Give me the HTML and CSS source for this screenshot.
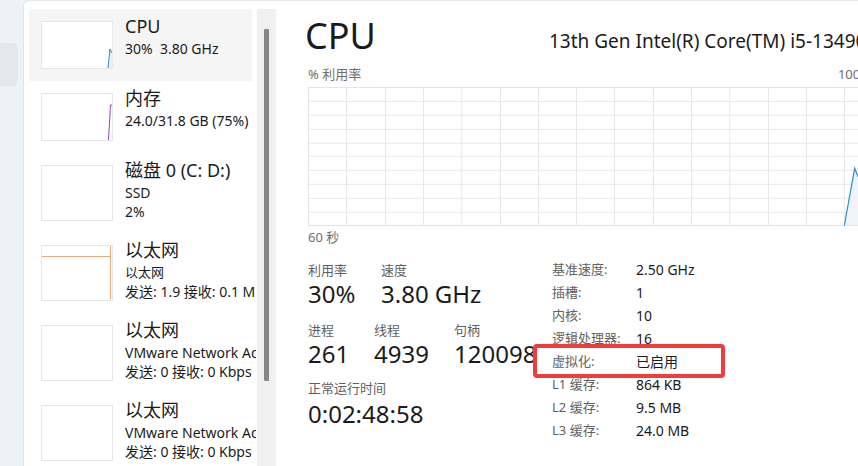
FILE: index.html
```html
<!DOCTYPE html>
<html lang="zh-CN">
<head>
<meta charset="utf-8">
<title>任务管理器 - 性能</title>
<link rel="stylesheet" href="styles.css">
</head>
<body>
<div class="app">
  <nav class="rail"><div class="rail-pill"></div></nav>
  <main class="main">
    <section class="sidebar">
      <div class="list">
        <div class="item item-sel">
          <div class="thumb">
            <svg class="spark" width="70" height="46" viewBox="0 0 70 46">
              <polygon points="66,46 68,27 70,31 70,46" fill="#e8f1fa"/>
              <polyline points="66,46 68,27 70,31" fill="none" stroke="#2f8ad0" stroke-width="1"/>
            </svg>
          </div>
          <div class="info">
            <div class="title">CPU</div>
            <div class="sub">30%&nbsp; 3.80 GHz</div>
          </div>
        </div>
        <div class="item">
          <div class="thumb">
            <svg class="spark" width="70" height="46" viewBox="0 0 70 46">
              <polyline points="66.5,46 68.5,11 70,11" fill="none" stroke="#9a42b8" stroke-width="1"/>
            </svg>
          </div>
          <div class="info">
            <div class="title">内存</div>
            <div class="sub">24.0/31.8 GB (75%)</div>
          </div>
        </div>
        <div class="item item-3">
          <div class="thumb"></div>
          <div class="info">
            <div class="title">磁盘 0 (C: D:)</div>
            <div class="sub">SSD</div>
            <div class="sub">2%</div>
          </div>
        </div>
        <div class="item item-3">
          <div class="thumb">
            <svg class="spark" width="70" height="54" viewBox="0 0 70 54">
              <line x1="0" y1="10.5" x2="69" y2="10.5" stroke="#e8a878" stroke-width="1"/>
              <line x1="68.5" y1="0" x2="68.5" y2="53" stroke="#e8a878" stroke-width="1"/>
            </svg>
          </div>
          <div class="info">
            <div class="title">以太网</div>
            <div class="sub sub-cjk">以太网</div>
            <div class="sub">发送: 1.9 接收: 0.1 Mbps</div>
          </div>
        </div>
        <div class="item item-3">
          <div class="thumb"></div>
          <div class="info">
            <div class="title">以太网</div>
            <div class="sub">VMware Network Adapter VMnet1</div>
            <div class="sub">发送: 0 接收: 0 Kbps</div>
          </div>
        </div>
        <div class="item item-3">
          <div class="thumb"></div>
          <div class="info">
            <div class="title">以太网</div>
            <div class="sub">VMware Network Adapter VMnet8</div>
            <div class="sub">发送: 0 接收: 0 Kbps</div>
          </div>
        </div>
      </div>
      <div class="track"><div class="track-thumb"></div></div>
    </section>

    <section class="detail">
      <header class="head">
        <h1 class="big-title">CPU</h1>
        <div class="cpu-name">13th Gen Intel(R) Core(TM) i5-13490F</div>
      </header>

      <div class="axis-row">
        <span>% 利用率</span>
        <span>100%</span>
      </div>
      <svg class="graph" width="560" height="139" viewBox="0 0 560 139">
        <g stroke="#e8e8e8" stroke-width="1">
          <line x1="0" y1="14.3" x2="560" y2="14.3"/>
          <line x1="0" y1="28.3" x2="560" y2="28.3"/>
          <line x1="0" y1="42.3" x2="560" y2="42.3"/>
          <line x1="0" y1="56.3" x2="560" y2="56.3"/>
          <line x1="0" y1="69.3" x2="560" y2="69.3"/>
          <line x1="0" y1="83.3" x2="560" y2="83.3"/>
          <line x1="0" y1="97.3" x2="560" y2="97.3"/>
          <line x1="0" y1="111.3" x2="560" y2="111.3"/>
          <line x1="0" y1="125.3" x2="560" y2="125.3"/>
          <line x1="38.5" y1="0" x2="38.5" y2="139"/>
          <line x1="77.5" y1="0" x2="77.5" y2="139"/>
          <line x1="115.5" y1="0" x2="115.5" y2="139"/>
          <line x1="153.8" y1="0" x2="153.8" y2="139"/>
          <line x1="192.5" y1="0" x2="192.5" y2="139"/>
          <line x1="230.5" y1="0" x2="230.5" y2="139"/>
          <line x1="268.5" y1="0" x2="268.5" y2="139"/>
          <line x1="306.5" y1="0" x2="306.5" y2="139"/>
          <line x1="345.5" y1="0" x2="345.5" y2="139"/>
          <line x1="383.5" y1="0" x2="383.5" y2="139"/>
          <line x1="421.8" y1="0" x2="421.8" y2="139"/>
          <line x1="460.5" y1="0" x2="460.5" y2="139"/>
          <line x1="498.5" y1="0" x2="498.5" y2="139"/>
          <line x1="536.5" y1="0" x2="536.5" y2="139"/>
        </g>
        <rect x="0.5" y="0.5" width="559" height="138" fill="none" stroke="#e4e4e4" stroke-width="1"/>
        <polygon points="536.3,138 546.7,81.3 550,89.7 560,96 560,138" fill="#eef4fa"/>
        <polyline points="536.3,138.5 546.7,81.3 550,89.7 560,96" fill="none" stroke="#2f8ad0" stroke-width="1.2"/>
      </svg>
      <div class="axis-row axis-bottom">
        <span>60 秒</span>
        <span>0</span>
      </div>

      <div class="stats">
        <div class="stats-left">
          <div class="stat-row">
            <div class="stat stat-w73">
              <div class="stat-label">利用率</div>
              <div class="stat-value">30%</div>
            </div>
            <div class="stat">
              <div class="stat-label">速度</div>
              <div class="stat-value">3.80 GHz</div>
            </div>
          </div>
          <div class="stat-row stat-row-2">
            <div class="stat stat-w66">
              <div class="stat-label">进程</div>
              <div class="stat-value">261</div>
            </div>
            <div class="stat stat-w80">
              <div class="stat-label">线程</div>
              <div class="stat-value">4939</div>
            </div>
            <div class="stat">
              <div class="stat-label">句柄</div>
              <div class="stat-value">120098</div>
            </div>
          </div>
          <div class="stat-row stat-row-3">
            <div class="stat">
              <div class="stat-label">正常运行时间</div>
              <div class="stat-value stat-uptime">0:02:48:58</div>
            </div>
          </div>
        </div>
        <dl class="specs">
          <dt>基准速度:</dt><dd>2.50 GHz</dd>
          <dt>插槽:</dt><dd>1</dd>
          <dt>内核:</dt><dd>10</dd>
          <dt>逻辑处理器:</dt><dd>16</dd>
          <dt>虚拟化:</dt><dd>已启用</dd>
          <dt>L1 缓存:</dt><dd>864 KB</dd>
          <dt>L2 缓存:</dt><dd>9.5 MB</dd>
          <dt>L3 缓存:</dt><dd>24.0 MB</dd>
        </dl>
      </div>
    </section>
  </main>
  <div class="highlight"></div>
</div>
</body>
</html>
```

FILE: styles.css
```css
* { box-sizing: border-box; }

html, body {
  margin: 0;
  padding: 0;
}

body {
  width: 858px;
  height: 466px;
  overflow: hidden;
  background: #eef2f7;
  font-family: "Noto Sans", "Noto Sans CJK SC", sans-serif;
  color: #1b1b1b;
}

.app {
  position: relative;
  display: flex;
  height: 466px;
}

/* left navigation rail */
.rail {
  flex: none;
  width: 23px;
  padding-top: 43px;
}

.rail-pill {
  width: 18px;
  height: 43px;
  background: #e4e8ee;
  border-radius: 0 5px 5px 0;
}

/* main white panel */
.main {
  flex: none;
  width: 900px;
  display: flex;
  background: #ffffff;
  border-left: 1px solid #e2e5e9;
  border-top: 1px solid #e6e6e6;
  border-top-left-radius: 6px;
}

/* sidebar list */
.sidebar {
  flex: none;
  display: flex;
  padding-left: 5px;
  padding-top: 8px;
}

.list {
  width: 227px;
  overflow: hidden;
}

.item {
  display: flex;
  height: 72px;
  width: 223px;
}

.item-3 { height: 80px; }

.item-sel { background: #f5f5f5; }

.thumb {
  flex: none;
  width: 72px;
  height: 48px;
  margin: 12px 0 0 12px;
  border: 1px solid #e6e6e6;
  background: #ffffff;
}

.item-3 .thumb { height: 56px; }

.spark { display: block; }

.info {
  margin-left: 12px;
  padding-top: 5px;
  white-space: nowrap;
}

.title {
  font-size: 18px;
  line-height: 25px;
}

.sub {
  font-size: 14px;
  line-height: 19px;
}

.sub-cjk { font-size: 13px; }

.track {
  width: 19px;
  margin-left: 1px;
  height: 470px;
  background: #f0f0f0;
  padding: 20px 0 0 7px;
}

.track-thumb {
  width: 5px;
  height: 352px;
  background: #868686;
  border-radius: 1px;
}

/* detail panel */
.detail {
  flex: none;
  width: 600px;
  padding: 11px 0 0 32px;
  white-space: nowrap;
}

.head {
  display: flex;
  align-items: flex-start;
  height: 48px;
}

.big-title {
  margin: 0 0 0 -3px;
  width: 244px;
  flex: none;
  font-size: 36px;
  line-height: 48px;
  font-weight: 400;
}

.cpu-name {
  margin-top: 17px;
  font-size: 19px;
  line-height: 24px;
}

.axis-row {
  width: 560px;
  display: flex;
  justify-content: space-between;
  margin-top: 5px;
  font-size: 13px;
  line-height: 18px;
  color: #6e6e6e;
}

.axis-row span:last-child { margin-right: -3px; }

.axis-bottom {
  margin-top: 3px;
  line-height: 17px;
}

.axis-bottom span:last-child { visibility: hidden; }

.graph {
  display: block;
  margin-top: 4px;
}

.stats {
  display: flex;
  margin-top: 12px;
}

.stats-left {
  flex: none;
  width: 228px;
  overflow: hidden;
  padding-top: 4px;
}

.stat-row { display: flex; }
.stat-row-2 { margin-top: 13px; }
.stat-row-3 { margin-top: 11px; }

.stat { flex: none; }
.stat-w73 { width: 73px; }
.stat-w66 { width: 66px; }
.stat-w80 { width: 80px; }

.stat-label {
  font-size: 13px;
  line-height: 17px;
  color: #5f5f5f;
}

.stat-value {
  font-size: 24px;
  line-height: 30px;
  color: #1b1b1b;
}

.stat-uptime { margin-top: 2px; }

.specs {
  margin: 0 0 0 16px;
  display: grid;
  grid-template-columns: 84px auto;
  font-size: 13px;
  line-height: 23px;
}

.specs dt {
  color: #616161;
}

.specs dd {
  margin: 0;
  font-size: 14px;
  color: #1b1b1b;
}

/* red annotation box drawn over the screenshot */
.highlight {
  position: absolute;
  left: 533px;
  top: 344px;
  width: 192px;
  height: 34px;
  border: 4px solid #f03c3c;
  border-radius: 4px;
  pointer-events: none;
}
```
